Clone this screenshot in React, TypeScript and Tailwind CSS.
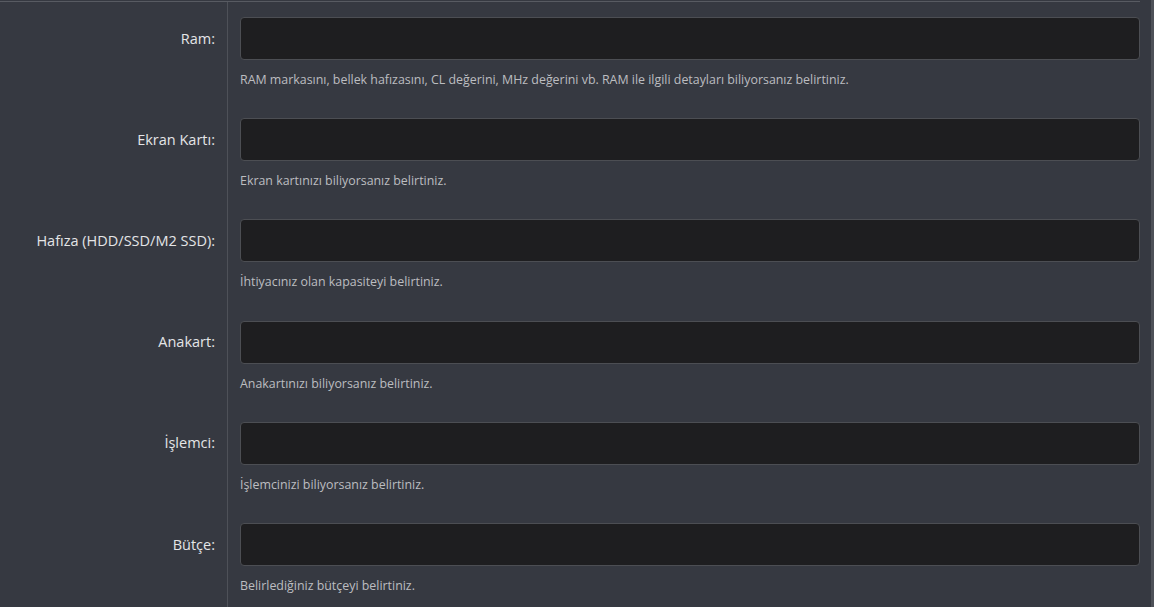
const fields = [
  {
    label: "Ram:",
    help: "RAM markasını, bellek hafızasını, CL değerini, MHz değerini vb. RAM ile ilgili detayları biliyorsanız belirtiniz.",
  },
  { label: "Ekran Kartı:", help: "Ekran kartınızı biliyorsanız belirtiniz." },
  { label: "Hafıza (HDD/SSD/M2 SSD):", help: "İhtiyacınız olan kapasiteyi belirtiniz." },
  { label: "Anakart:", help: "Anakartınızı biliyorsanız belirtiniz." },
  { label: "İşlemci:", help: "İşlemcinizi biliyorsanız belirtiniz." },
  { label: "Bütçe:", help: "Belirlediğiniz bütçeyi belirtiniz." },
];

export default function App() {
  return (
    <div
      className="h-[607px] w-full overflow-hidden bg-[#363941] border-r-[3px] border-[#4e5158]"
      style={{ fontFamily: '"Open Sans", "Noto Sans", sans-serif' }}
    >
      <div className="mt-px h-px mr-[11px] bg-[#585b62]" />
      <div className="flex">
        <div className="w-[228px] shrink-0 border-r border-[#4e5158] pt-[15px]">
          {fields.map((f) => (
            <div key={f.label} className="h-[101.2px]">
              <div className="flex h-[43px] items-center justify-end pr-[12px] text-[14.5px] text-[#e4e5e7]">
                {f.label}
              </div>
            </div>
          ))}
        </div>
        <div className="flex-1 pl-[12px] pr-[11px] pt-[15px]">
          {fields.map((f) => (
            <div key={f.label} className="h-[101.2px]">
              <input
                type="text"
                className="block h-[43px] w-full rounded-[4px] border border-[#4c4e53] bg-[#1e1e20] px-3 text-[14px] text-white outline-none"
              />
              <p className="mt-[12px] text-[12.4px] leading-[16px] text-[#bcbdc0]">{f.help}</p>
            </div>
          ))}
        </div>
      </div>
    </div>
  );
}
